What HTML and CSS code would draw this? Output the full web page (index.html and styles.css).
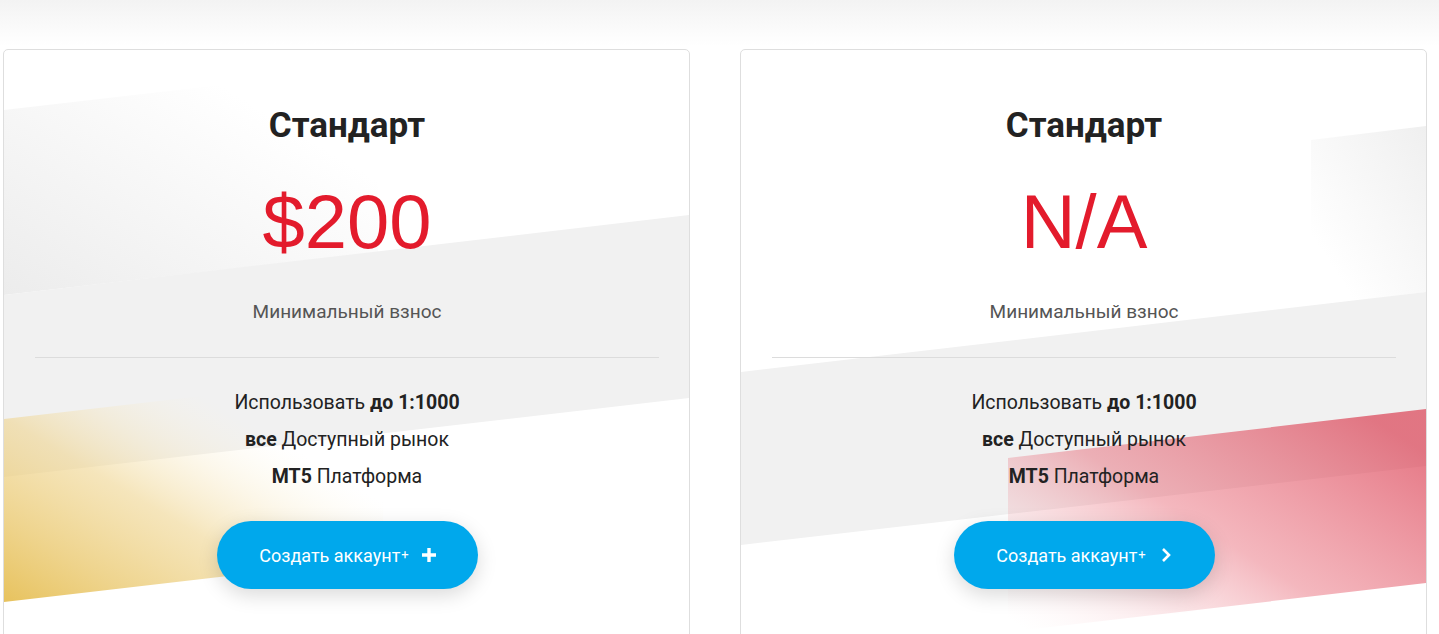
FILE: index.html
```html
<!DOCTYPE html>
<html lang="ru">
<head>
    <meta charset="UTF-8">
    <meta name="viewport" content="width=device-width, initial-scale=1.0">
    <title>Счета</title>
    <link rel="stylesheet" href="styles.css">
</head>
<body>
    <section class="plans">
        <div class="plan">
            <svg class="plan-bg" width="686" height="640" aria-hidden="true">
                <defs>
                    <linearGradient id="fadeA" x1="0" y1="1" x2="1" y2="0">
                        <stop offset="0" stop-color="#ececec"/>
                        <stop offset="0.75" stop-color="#ffffff"/>
                    </linearGradient>
                    <linearGradient id="gold" x1="0" y1="1" x2="0.9" y2="0.1">
                        <stop offset="0" stop-color="#e6bf55" stop-opacity="0.95"/>
                        <stop offset="0.45" stop-color="#efd48e" stop-opacity="0.6"/>
                        <stop offset="0.8" stop-color="#fbf3dc" stop-opacity="0"/>
                    </linearGradient>
                </defs>
                <polygon points="0,60 374,17 374,202 0,245" fill="url(#fadeA)"/>
                <polygon points="0,245 686,165 686,348 0,427" fill="#f1f1f1"/>
                <polygon points="0,369 379,325 379,508 0,552" fill="url(#gold)"/>
            </svg>
            <h2 class="plan-name">Стандарт</h2>
            <p class="plan-price">$200</p>
            <p class="plan-note">Минимальный взнос</p>
            <ul class="plan-features">
                <li>Использовать <b>до 1:1000</b></li>
                <li><b>все</b> Доступный рынок</li>
                <li><b>MT5</b> Платформа</li>
            </ul>
            <a class="plan-btn" href="#">
                Создать аккаунт<span class="sup">+</span>
                <svg class="btn-icon" width="16" height="16" viewBox="0 0 16 16"><path d="M8 1v14M1 8h14" stroke="#fff" stroke-width="3.4" fill="none"/></svg>
            </a>
        </div>

        <div class="plan">
            <svg class="plan-bg" width="686" height="640" aria-hidden="true">
                <defs>
                    <linearGradient id="fadeB" x1="1" y1="0" x2="0" y2="1">
                        <stop offset="0" stop-color="#efefef"/>
                        <stop offset="0.8" stop-color="#ffffff"/>
                    </linearGradient>
                    <linearGradient id="red" x1="1" y1="0.2" x2="0.05" y2="1">
                        <stop offset="0" stop-color="#d9364a" stop-opacity="0.66"/>
                        <stop offset="0.5" stop-color="#e55464" stop-opacity="0.42"/>
                        <stop offset="1" stop-color="#f7c5ca" stop-opacity="0"/>
                    </linearGradient>
                </defs>
                <polygon points="570,90 686,76 686,242 570,256" fill="url(#fadeB)"/>
                <polygon points="0,322 686,242 686,416 0,495" fill="#f1f1f1"/>
                <polygon points="267,408 686,359 686,533 267,582" fill="url(#red)"/>
            </svg>
            <h2 class="plan-name">Стандарт</h2>
            <p class="plan-price">N/A</p>
            <p class="plan-note">Минимальный взнос</p>
            <ul class="plan-features">
                <li>Использовать <b>до 1:1000</b></li>
                <li><b>все</b> Доступный рынок</li>
                <li><b>MT5</b> Платформа</li>
            </ul>
            <a class="plan-btn" href="#">
                Создать аккаунт<span class="sup">+</span>
                <svg class="btn-icon" width="16" height="16" viewBox="0 0 16 16"><path d="M5 2l6 6-6 6" stroke="#fff" stroke-width="2.6" fill="none"/></svg>
            </a>
        </div>
    </section>
</body>
</html>
```

FILE: styles.css
```css
body {
    margin: 0;
    font-family: Roboto, "Liberation Sans", sans-serif;
    color: #222;
    background: linear-gradient(#f3f3f3, #fff 46px) no-repeat;
    overflow: hidden;
}

.plans {
    display: grid;
    grid-template-columns: 1fr 1fr;
    gap: 50px;
    padding: 49px 12px 0 3px;
}

.plan {
    position: relative;
    overflow: hidden;
    display: flex;
    flex-direction: column;
    align-items: center;
    padding: 56px 30px 80px 31px;
    background: #fff;
    border: 1px solid #dedede;
    border-radius: 5px;
    text-align: center;
}

.plan-bg {
    position: absolute;
    left: 0;
    top: 0;
}

.plan > *:not(.plan-bg) {
    position: relative;
}

.plan-name {
    margin: 0;
    font-size: 35px;
    line-height: 40px;
    font-weight: 700;
    color: #222;
}

.plan-price {
    margin: 36px 0 0;
    font-family: "Liberation Sans", Arial, sans-serif;
    font-size: 76px;
    line-height: 80px;
    color: #e31b2c;
}

.plan-note {
    margin: 37px 0 0;
    font-size: 19px;
    line-height: 26px;
    color: #555;
    align-self: stretch;
    padding-bottom: 32px;
    border-bottom: 1px solid #dcdcdc;
}

.plan-features {
    list-style: none;
    margin: 26px 0 0;
    padding: 0;
    font-size: 19.5px;
    line-height: 37px;
}

.plan-features b {
    font-weight: 700;
}

.plan-btn {
    display: flex;
    align-items: center;
    justify-content: center;
    margin-top: 26px;
    width: 261px;
    height: 68px;
    box-sizing: border-box;
    padding-left: 2px;
    border-radius: 34px;
    background: #00a8ec;
    box-shadow: 0 6px 20px rgba(0, 0, 0, 0.15);
    color: #fff;
    font-size: 18px;
    text-decoration: none;
}

.plan-btn .sup {
    font-size: 13px;
    margin: 0 12px 0 1px;
    position: relative;
    top: -1px;
}
```
